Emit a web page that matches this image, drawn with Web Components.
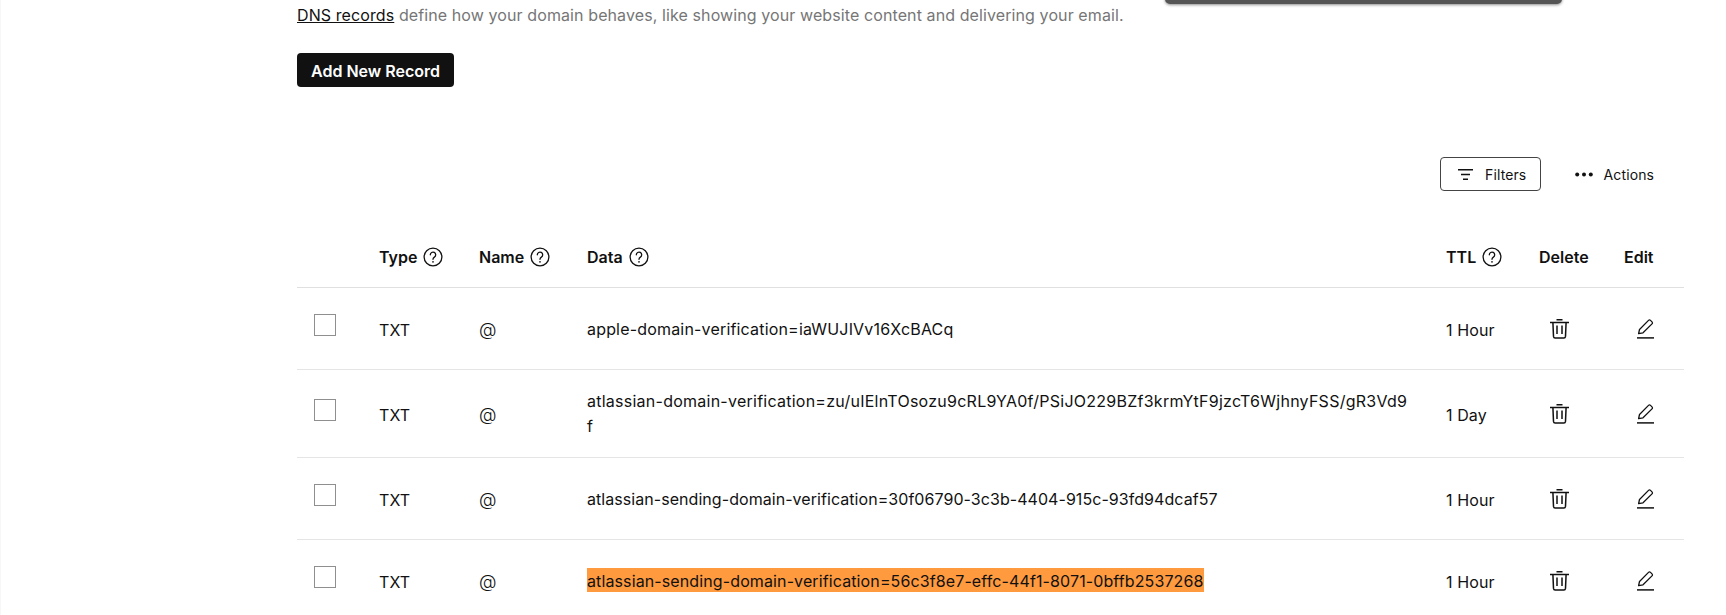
<!DOCTYPE html>
<html>
<head>
<meta charset="utf-8">
<title>DNS records</title>
<style>
    html, body { margin: 0; background: #fff; height: 100%; overflow: hidden; }
    body { font-family: Inter, "Liberation Sans", sans-serif; color: #111; letter-spacing: .1px; }
</style>
</head>
<body>
<dns-page>
    <dns-intro slot="intro"><a>DNS records</a> define how your domain behaves, like showing your website content and delivering your email.</dns-intro>
    <dns-button slot="add">Add New Record</dns-button>
    <dns-toolbar slot="toolbar"></dns-toolbar>
    <dns-table slot="table">
        <dns-row ttl="1 Hour" style="--data-spacing: .18px">apple-domain-verification=iaWUJIVv16XcBACq</dns-row>
        <dns-row ttl="1 Day" tall style="--data-spacing: .25px">atlassian-domain-verification=zu/uIElnTOsozu9cRL9YA0f/PSiJO229BZf3krmYtF9jzcT6WjhnyFSS/gR3Vd9f</dns-row>
        <dns-row ttl="1 Hour" style="--data-spacing: .055px">atlassian-sending-domain-verification=30f06790-3c3b-4404-915c-93fd94dcaf57</dns-row>
        <dns-row ttl="1 Hour" marked style="--data-spacing: .115px">atlassian-sending-domain-verification=56c3f8e7-effc-44f1-8071-0bffb2537268</dns-row>
    </dns-table>
</dns-page>

<script>
const ICONS = {
    help: `<svg width="20" height="20" viewBox="0 0 20 20" fill="none" stroke="currentColor" stroke-width="1.3"><circle cx="10" cy="10" r="8.9"/><path d="M7.3 7.8a2.7 2.7 0 1 1 4.1 2.3c-.9.6-1.4 1-1.4 2.2" stroke-linecap="round"/><circle cx="10" cy="14.8" r=".85" fill="currentColor" stroke="none"/></svg>`,
    filter: `<svg width="15" height="11" viewBox="0 0 15 11" fill="none" stroke="currentColor" stroke-width="1.4"><path d="M0 .7h15M3 5.5h9M5 10.3h5"/></svg>`,
    dots: `<svg width="18" height="5" viewBox="0 0 18 5" fill="currentColor"><circle cx="2.2" cy="2.5" r="2"/><circle cx="9" cy="2.5" r="2"/><circle cx="15.8" cy="2.5" r="2"/></svg>`,
    trash: `<svg width="19" height="20" viewBox="0 0 19 20" fill="none" stroke="currentColor" stroke-width="1.5"><path d="M0 3.4h19M6.5 .8h6M2.9 3.4l.6 14c.1.9.7 1.6 1.6 1.6h8.8c.9 0 1.5-.7 1.6-1.6l.6-14M7 6.5v8.5M12 6.5v8.5"/></svg>`,
    pencil: `<svg width="17" height="20" viewBox="0 0 17 20" fill="none" stroke="currentColor" stroke-width="1.3"><path d="M1.6 14.7l.9-4.2L11.5 1.4c.6-.6 1.4-.6 2 0l1.5 1.5c.6.6.6 1.4 0 2L6 13.8z" stroke-linejoin="round"/><path d="M0 18.9h17" stroke-width="1.5"/></svg>`
};

// all rows and the header share these columns
const COLUMNS = "82px 100px 108px 859px 93px 85px 60px";

class DnsPage extends HTMLElement {
    constructor() {
        super();
        this.attachShadow({ mode: "open" });
        this.shadowRoot.innerHTML = `
            <style>
                :host { display: block; position: relative; height: 615px; overflow: hidden; box-sizing: border-box; padding: 5px 42px 0 297px; box-shadow: inset 1px 0 0 #f7f7f7; }
                .popup { position: absolute; top: -10px; left: 1165px; width: 397px; height: 14px; background: #555; border-radius: 0 0 5px 5px; box-shadow: 0 1px 3px rgba(0,0,0,.45); }
                .add { display: flex; margin-top: 27px; }
                .toolbar { margin-top: 70px; }
            </style>
            <div class="popup"></div>
            <slot name="intro"></slot>
            <div class="add"><slot name="add"></slot></div>
            <div class="toolbar"><slot name="toolbar"></slot></div>
            <slot name="table"></slot>
        `;
    }
}

class DnsIntro extends HTMLElement {
    constructor() {
        super();
        this.attachShadow({ mode: "open" });
        this.shadowRoot.innerHTML = `
            <style>
                :host { display: block; font-size: 16px; line-height: 21px; color: #767676; }
                ::slotted(a) { color: #111; text-decoration: underline; }
            </style>
            <slot></slot>
        `;
    }
}

class DnsButton extends HTMLElement {
    constructor() {
        super();
        this.attachShadow({ mode: "open" });
        this.shadowRoot.innerHTML = `
            <style>
                :host { display: inline-flex; align-items: center; justify-content: center; height: 34px; width: 157px; padding-top: 2px; box-sizing: border-box; background: #111; color: #fff; border-radius: 4px; font-size: 16px; font-weight: 600; letter-spacing: 0; }
            </style>
            <slot></slot>
        `;
    }
}

class DnsToolbar extends HTMLElement {
    constructor() {
        super();
        this.attachShadow({ mode: "open" });
        this.shadowRoot.innerHTML = `
            <style>
                :host { display: flex; justify-content: flex-end; align-items: center; gap: 34px; padding-right: 30px; font-size: 14px; }
                .btn { display: flex; align-items: center; gap: 12.5px; height: 34px; width: 101px; box-sizing: border-box; padding-left: 17px; border: 1px solid #444; border-radius: 4px; }
                .act { display: flex; align-items: center; gap: 11px; }
                span { padding-top: 1px; }
                svg { display: block; }
            </style>
            <div class="btn">${ICONS.filter}<span>Filters</span></div>
            <div class="act">${ICONS.dots}<span>Actions</span></div>
        `;
    }
}

class DnsTable extends HTMLElement {
    constructor() {
        super();
        this.attachShadow({ mode: "open" });
        this.shadowRoot.innerHTML = `
            <style>
                :host { display: block; margin-top: 20px; }
                .head { display: grid; grid-template-columns: ${COLUMNS}; height: 77px; padding-top: 16px; align-items: center; border-bottom: 1px solid #e0e0e0; font-size: 16px; font-weight: 600; letter-spacing: 0; box-sizing: border-box; }
                .cell { display: flex; align-items: center; gap: 6px; }
                svg { display: block; }
            </style>
            <div class="head">
                <span></span>
                <div class="cell">Type ${ICONS.help}</div>
                <div class="cell">Name ${ICONS.help}</div>
                <div class="cell">Data ${ICONS.help}</div>
                <div class="cell">TTL ${ICONS.help}</div>
                <div class="cell">Delete</div>
                <div class="cell">Edit</div>
            </div>
            <slot></slot>
        `;
    }
}

class DnsRow extends HTMLElement {
    constructor() {
        super();
        this.attachShadow({ mode: "open" });
        const ttl = this.getAttribute("ttl");
        this.shadowRoot.innerHTML = `
            <style>
                :host { display: grid; grid-template-columns: ${COLUMNS}; min-height: 82px; align-items: center; border-bottom: 1px solid #e5e5e8; font-size: 16px; box-sizing: border-box; }
                :host([tall]) { min-height: 88px; }
                .check { width: 22px; height: 22px; margin: 0 0 7px 17px; border: 1px solid #8f8f8f; box-sizing: border-box; }
                .text { padding-top: 2px; }
                .at { font-size: 18px; font-weight: 300; line-height: 20px; padding-top: 3px; }
                .data { width: 822px; padding-top: 2px; line-height: 25px; word-break: break-all; letter-spacing: var(--data-spacing); }
                :host([tall]) .data { padding-top: 0; }
                :host([marked]) .txt { background: #ff9a3f; color: #111; padding: 3px 0 1px; }
                .icon { display: flex; margin: 0 0 0 11px; }
                .icon.edit { margin-left: 12.5px; }
                svg { display: block; }
            </style>
            <div class="check"></div>
            <div class="text">TXT</div>
            <div class="at">@</div>
            <div class="data"><span class="txt"><slot></slot></span></div>
            <div class="text">${ttl}</div>
            <div class="icon">${ICONS.trash}</div>
            <div class="icon edit">${ICONS.pencil}</div>
        `;
    }
}

customElements.define("dns-page", DnsPage);
customElements.define("dns-intro", DnsIntro);
customElements.define("dns-button", DnsButton);
customElements.define("dns-toolbar", DnsToolbar);
customElements.define("dns-table", DnsTable);
customElements.define("dns-row", DnsRow);
</script>
</body>
</html>
